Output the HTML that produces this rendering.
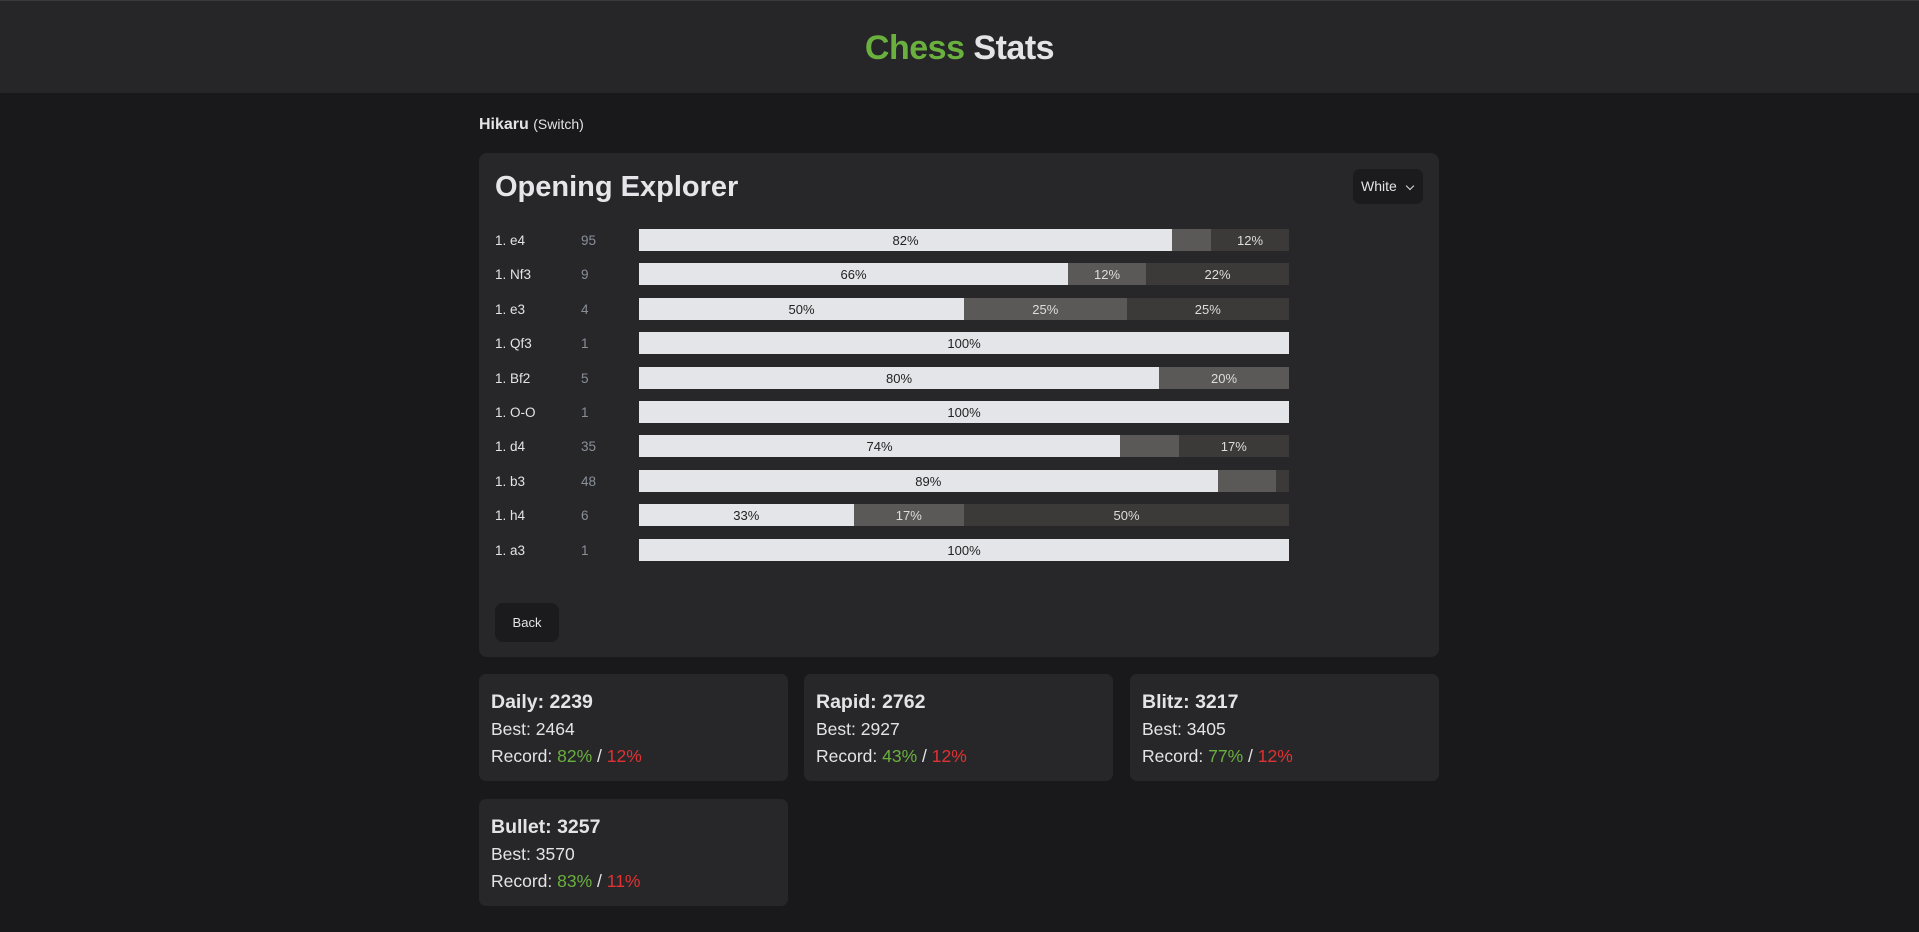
<!DOCTYPE html>
<html><head><meta charset="utf-8"><style>
*{margin:0;padding:0;box-sizing:border-box}
body{width:1919px;height:932px;background:#19191b;font-family:"Liberation Sans",sans-serif;color:#e4e4e7;position:relative;overflow:hidden}
.hdr{position:absolute;left:0;top:0;width:1919px;height:93px;background:#262628;border-top:1px solid #3a3a3c;text-align:center}
.hdr h1{font-size:34px;font-weight:bold;line-height:94px;letter-spacing:-0.5px}
.g{color:#6ab03e}
.user{position:absolute;left:479px;top:116px;font-size:16px}
.user small{font-size:14px}
.card{position:absolute;background:#27272a;border-radius:8px}
.ttl{position:absolute;left:495px;top:171px;font-size:29px;font-weight:bold;color:#e6e6ea}
.sel{position:absolute;left:1353px;top:169px;width:70px;height:35px;background:#1b1b1d;border-radius:7px;font-size:14px;line-height:35px;padding-left:8px}
.sel:after{content:"";position:absolute;right:10px;top:14px;width:5px;height:5px;border-right:1.5px solid #ddd;border-bottom:1.5px solid #ddd;transform:rotate(45deg)}
.row{position:absolute;left:495px;height:22px;font-size:13.5px;line-height:24px;width:800px}
.row .m{position:absolute;left:0}
.row .n{position:absolute;left:86px;color:#8a8f99}
.bar{position:absolute;left:144px;width:650px;height:22px;display:flex}
.bar div{height:22px;text-align:center;font-size:13px;line-height:24px}
.w{background:#e4e5e9;color:#222}
.d{background:#5a5957;color:#ddd}
.l{background:#3c3a38;color:#ddd}
.back{position:absolute;left:495px;top:603px;width:64px;height:39px;background:#1b1b1d;border-radius:8px;font-size:13px;line-height:40px;text-align:center}
.st{position:absolute;width:309px;height:107px;background:#27272a;border-radius:7px;padding:14px 12px;font-size:17.5px;color:#e4e4e7}
.st b{display:block;font-size:19.5px;line-height:28px;margin-bottom:0}
.st p{line-height:27px}
.gr{color:#6ab03e}.rd{color:#e03232}
</style></head><body>
<div class="hdr"><h1><span class="g">Chess</span> Stats</h1></div>
<div class="user"><b>Hikaru</b> <small>(Switch)</small></div>
<div class="card" style="left:479px;top:153px;width:960px;height:504px"></div>
<div class="ttl">Opening Explorer</div>
<div class="sel">White</div>

<div class="row" style="top:229px"><span class="m">1. e4</span><span class="n">95</span><div class="bar"><div class="w" style="width:82%">82%</div><div class="d" style="width:6%"></div><div class="l" style="width:12%">12%</div></div></div>
<div class="row" style="top:263px"><span class="m">1. Nf3</span><span class="n">9</span><div class="bar"><div class="w" style="width:66%">66%</div><div class="d" style="width:12%">12%</div><div class="l" style="width:22%">22%</div></div></div>
<div class="row" style="top:298px"><span class="m">1. e3</span><span class="n">4</span><div class="bar"><div class="w" style="width:50%">50%</div><div class="d" style="width:25%">25%</div><div class="l" style="width:25%">25%</div></div></div>
<div class="row" style="top:332px"><span class="m">1. Qf3</span><span class="n">1</span><div class="bar"><div class="w" style="width:100%">100%</div></div></div>
<div class="row" style="top:367px"><span class="m">1. Bf2</span><span class="n">5</span><div class="bar"><div class="w" style="width:80%">80%</div><div class="d" style="width:20%">20%</div></div></div>
<div class="row" style="top:401px"><span class="m">1. O-O</span><span class="n">1</span><div class="bar"><div class="w" style="width:100%">100%</div></div></div>
<div class="row" style="top:435px"><span class="m">1. d4</span><span class="n">35</span><div class="bar"><div class="w" style="width:74%">74%</div><div class="d" style="width:9%"></div><div class="l" style="width:17%">17%</div></div></div>
<div class="row" style="top:470px"><span class="m">1. b3</span><span class="n">48</span><div class="bar"><div class="w" style="width:89%">89%</div><div class="d" style="width:9%"></div><div class="l" style="width:2%"></div></div></div>
<div class="row" style="top:504px"><span class="m">1. h4</span><span class="n">6</span><div class="bar"><div class="w" style="width:33%">33%</div><div class="d" style="width:17%">17%</div><div class="l" style="width:50%">50%</div></div></div>
<div class="row" style="top:539px"><span class="m">1. a3</span><span class="n">1</span><div class="bar"><div class="w" style="width:100%">100%</div></div></div>

<div class="back">Back</div>

<div class="st" style="left:479px;top:674px"><b>Daily: 2239</b><p>Best: 2464</p><p>Record: <span class="gr">82%</span> / <span class="rd">12%</span></p></div>
<div class="st" style="left:804px;top:674px"><b>Rapid: 2762</b><p>Best: 2927</p><p>Record: <span class="gr">43%</span> / <span class="rd">12%</span></p></div>
<div class="st" style="left:1130px;top:674px"><b>Blitz: 3217</b><p>Best: 3405</p><p>Record: <span class="gr">77%</span> / <span class="rd">12%</span></p></div>
<div class="st" style="left:479px;top:799px"><b>Bullet: 3257</b><p>Best: 3570</p><p>Record: <span class="gr">83%</span> / <span class="rd">11%</span></p></div>
</body></html>
